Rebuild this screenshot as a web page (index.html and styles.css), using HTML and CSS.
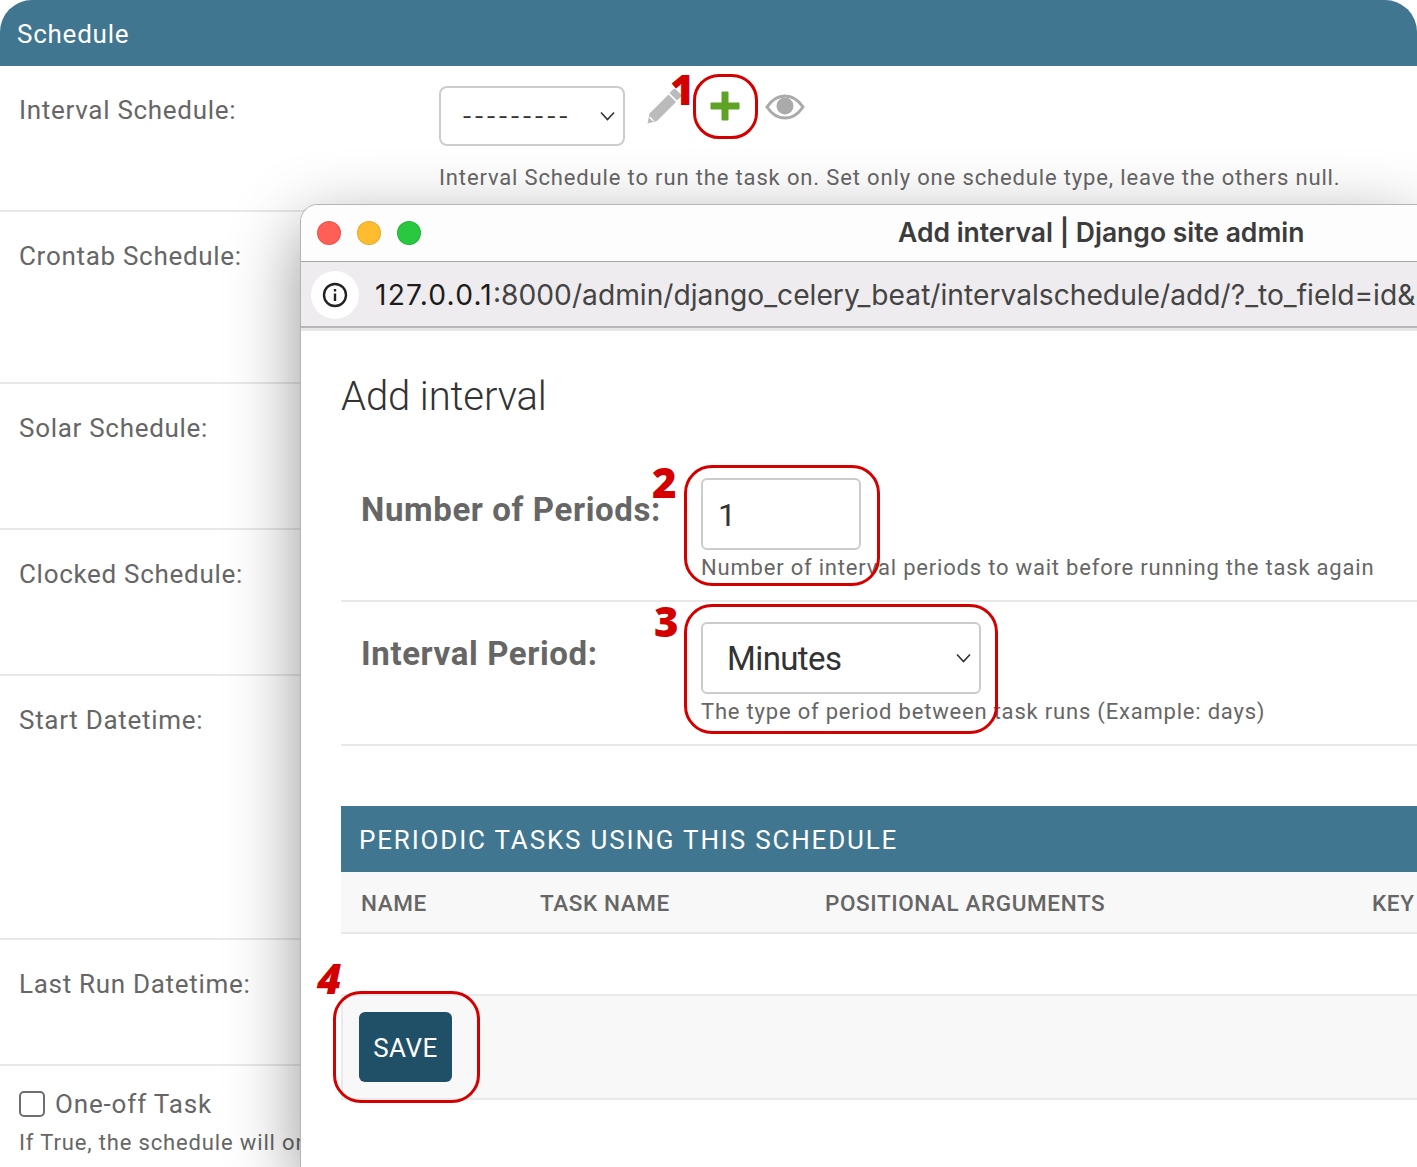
FILE: index.html
```html
<!DOCTYPE html>
<html>

<head>
  <title>Add interval | Django site admin</title>
  <link rel="stylesheet" href="styles.css">
</head>

<body>
  <div class="page">
    <h2 class="module-title">Schedule</h2>

    <div class="row row-interval">
      <div class="row-label">Interval Schedule:</div>
      <div class="row-field">
        <div class="field-line">
          <div class="select select-main"><span>---------</span>
            <svg class="chevron" viewBox="0 0 16 10"><path d="M1.500 1.500 8 8.500l6.500-7" /></svg>
          </div>
          <svg class="icon-pencil" viewBox="0 0 36 36"><path d="M27 1.500a2 2 0 0 1 3 0l4.500 4.500a2 2 0 0 1 0 3l-3.500 3.500-7.500-7.500Z" /><path d="M22.500 6.500 30 14 11 33 1.500 35.500 3.500 25.500Z" /><path class="pencil-cut" d="M3.500 29 7.500 33" /></svg>
          <svg class="icon-plus" viewBox="0 0 32 32"><path d="M12.500 2.500a1 1 0 0 1 1-1h5a1 1 0 0 1 1 1v10h10a1 1 0 0 1 1 1v5a1 1 0 0 1-1 1h-10v10a1 1 0 0 1-1 1h-5a1 1 0 0 1-1-1v-10h-10a1 1 0 0 1-1-1v-5a1 1 0 0 1 1-1h10Z" /></svg>
          <svg class="icon-eye" viewBox="0 0 40 26"><path class="eye-lid" d="M2 13C7 5.500 13 2 20 2s13 3.500 18 11c-5 7.500-11 11-18 11S7 20.500 2 13Z" /><circle cx="20" cy="12" r="8.500" /></svg>
        </div>
        <p class="help help-main">Interval Schedule to run the task on. Set only one schedule type, leave the others null.</p>
      </div>
    </div>
    <div class="row row-crontab"><div class="row-label">Crontab Schedule:</div></div>
    <div class="row row-solar"><div class="row-label">Solar Schedule:</div></div>
    <div class="row row-clocked"><div class="row-label">Clocked Schedule:</div></div>
    <div class="row row-start"><div class="row-label">Start Datetime:</div></div>
    <div class="row row-last"><div class="row-label">Last Run Datetime:</div></div>
    <div class="row-oneoff">
      <div class="oneoff-line"><span class="checkbox"></span>One-off Task</div>
      <p class="help">If True, the schedule will only run the task a single time</p>
    </div>
  </div>

  <div class="popup">
    <div class="titlebar">
      <div class="lights">
        <span class="light light-red"></span>
        <span class="light light-yellow"></span>
        <span class="light light-green"></span>
      </div>
      <div class="window-title">Add interval | Django site admin</div>
    </div>
    <div class="urlbar">
      <span class="info-badge">
        <svg viewBox="0 0 26 26"><circle cx="13" cy="13" r="11" /><path d="M13 11.500V19M13 7V9.500" /></svg>
      </span>
      <span class="url"><b>127.0.0.1</b>:8000/admin/django_celery_beat/intervalschedule/add/?_to_field=id&amp;</span>
    </div>

    <div class="content">
      <h1>Add interval</h1>

      <div class="popup-row">
        <div class="popup-label">Number of Periods:</div>
        <div>
          <div class="input">1</div>
          <p class="help">Number of interval periods to wait before running the task again</p>
        </div>
      </div>

      <div class="popup-row">
        <div class="popup-label">Interval Period:</div>
        <div>
          <div class="select select-period"><span>Minutes</span>
            <svg class="chevron" viewBox="0 0 16 10"><path d="M1.500 1.500 8 8.500l6.500-7" /></svg>
          </div>
          <p class="help">The type of period between task runs (Example: days)</p>
        </div>
      </div>

      <div class="inline-group">
        <h2 class="inline-title">PERIODIC TASKS USING THIS SCHEDULE</h2>
        <div class="inline-head">
          <span class="col col-name">NAME</span>
          <span class="col col-task">TASK NAME</span>
          <span class="col col-args">POSITIONAL ARGUMENTS</span>
          <span class="col">KEY</span>
        </div>
      </div>

      <div class="submit-row">
        <span class="save-btn">SAVE</span>
      </div>
    </div>
  </div>

  <!-- red tutorial marks -->
  <div class="mark mark-plus"></div>
  <div class="mark mark-periods"></div>
  <div class="mark mark-period"></div>
  <div class="mark mark-save"></div>
  <div class="num num-1">1</div>
  <div class="num num-2">2</div>
  <div class="num num-3">3</div>
  <div class="num num-4">4</div>
</body>

</html>
```

FILE: styles.css
```css
html,
body {
  margin: 0;
  height: 100%;
}

body {
  position: relative;
  width: 1417px;
  height: 1167px;
  overflow: hidden;
  background: #fff;
  font-family: Roboto, "Liberation Sans", sans-serif;
  color: #666;
}

p,
h1,
h2 {
  margin: 0;
  font-weight: 400;
}

/* page behind the popup */
.module-title {
  height: 66px;
  padding: 19px 0 0 17px;
  box-sizing: border-box;
  background: #417690;
  border-radius: 32px 32px 0 0;
  color: #fff;
  font-size: 26px;
  line-height: 30px;
  letter-spacing: 0.75px;
}

.row {
  display: flex;
  box-sizing: border-box;
  padding: 28px 0 0 19px;
  border-bottom: 2px solid #e8e8e8;
  font-size: 26px;
  letter-spacing: 0.7px;
}

.row-label {
  width: 420px;
  line-height: 32px;
  flex-shrink: 0;
}

.row-interval { height: 146px; }
.row-crontab { height: 172px; }
.row-solar { height: 146px; }
.row-clocked { height: 146px; }
.row-start { height: 264px; }
.row-last { height: 126px; }

.row-field {
  flex: 1;
}

.field-line {
  display: flex;
  align-items: flex-start;
}

.select {
  display: flex;
  align-items: center;
  justify-content: space-between;
  box-sizing: border-box;
  border: 2px solid #ccc;
  border-radius: 8px;
  color: #333;
}

.select-main {
  width: 186px;
  height: 60px;
  margin-top: -8px;
  padding: 0 7px 0 21px;
  font-family: Inter, "Liberation Sans", sans-serif;
  font-size: 22px;
  letter-spacing: 1.9px;
}

.chevron {
  width: 17px;
  height: 10px;
  flex-shrink: 0;
  fill: none;
  stroke: #333;
  stroke-width: 1.6;
}

.icon-pencil {
  width: 36px;
  height: 36px;
  margin: -6px 0 0 21px;
  fill: #bbb;
}

.pencil-cut {
  fill: none;
  stroke: #fff;
  stroke-width: 1.5;
}

.icon-plus {
  width: 32px;
  height: 32px;
  margin: -6px 0 0 27px;
  fill: #5fa225;
  position: relative;
  top: 2px;
}

.icon-eye {
  width: 40px;
  height: 26px;
  margin: 0 0 0 24px;
  fill: #aaa;
}

.eye-lid {
  fill: #fff;
  stroke: #aaa;
  stroke-width: 3;
}

.help {
  font-size: 22px;
  line-height: 28px;
  letter-spacing: 0.85px;
  color: #666;
  white-space: nowrap;
}

.help-main {
  margin-top: 18px;
}

.row-oneoff {
  padding: 22px 0 0 19px;
  font-size: 26px;
  letter-spacing: 0.85px;
}

.oneoff-line {
  display: flex;
  align-items: center;
  line-height: 32px;
}

.checkbox {
  width: 22px;
  height: 22px;
  margin-right: 10px;
  border: 2px solid #6f6f6f;
  border-radius: 5px;
}

.row-oneoff .help {
  margin-top: 9px;
}

/* popup window */
.popup {
  position: absolute;
  left: 300px;
  top: 204px;
  width: 1117px;
  height: 963px;
  box-sizing: border-box;
  overflow: hidden;
  background: #fff;
  border: 1px solid #b4b4b4;
  border-width: 1px 0 0 1px;
  border-radius: 18px 0 0 0;
  box-shadow: 0 22px 70px rgba(0, 0, 0, 0.42);
}

.titlebar {
  display: flex;
  align-items: center;
  box-sizing: border-box;
  height: 57px;
  padding: 0 0 3px 16px;
  background: #fdfdfd;
  border-bottom: 1px solid #a6a6a6;
}

.lights {
  display: flex;
  gap: 16px;
  margin-top: 3px;
}

.light {
  width: 24px;
  height: 24px;
  box-sizing: border-box;
  border-radius: 50%;
  border: 1px solid rgba(0, 0, 0, 0.1);
}

.light-red { background: #ff5f57; }
.light-yellow { background: #febc2e; }
.light-green { background: #28c840; }

.window-title {
  margin-left: 477px;
  font-family: Inter, "Liberation Sans", sans-serif;
  font-weight: 600;
  font-size: 26.500px;
  color: #3c3c3c;
  white-space: nowrap;
}

.urlbar {
  display: flex;
  align-items: center;
  box-sizing: border-box;
  height: 66px;
  padding: 1px 0 0 10px;
  background: #eeecee;
  border-bottom: 2px solid #b8b8b8;
  box-shadow: 0 3px 0 #e6e6e6;
}

.info-badge {
  display: flex;
  align-items: center;
  justify-content: center;
  flex-shrink: 0;
  width: 48px;
  height: 48px;
  background: #fff;
  border-radius: 50%;
}

.info-badge svg {
  width: 26px;
  height: 26px;
  fill: none;
  stroke: #222;
  stroke-width: 2.400;
}

.url {
  margin-left: 16px;
  font-family: Inter, "Liberation Sans", sans-serif;
  font-size: 28.200px;
  color: #444;
  white-space: nowrap;
}

.url b {
  font-weight: 400;
  letter-spacing: 1.2px;
  color: #1c1c1c;
}

.content {
  padding: 0 0 0 40px;
}

.content h1 {
  box-sizing: border-box;
  padding-top: 45px;
  height: 130px;
  font-size: 40px;
  font-weight: 300;
  line-height: 48px;
  letter-spacing: -0.1px;
  color: #333;
}

.popup-row {
  display: flex;
  box-sizing: border-box;
  height: 144px;
  padding: 20px 0 0 20px;
  border-bottom: 2px solid #e8e8e8;
}

.popup-label {
  width: 340px;
  flex-shrink: 0;
  margin-top: 12px;
  font-size: 33px;
  line-height: 40px;
  letter-spacing: 0.62px;
  font-weight: 700;
  color: #666;
  white-space: nowrap;
}

.input {
  box-sizing: border-box;
  width: 160px;
  height: 72px;
  padding: 0 15px;
  border: 2px solid #ccc;
  border-radius: 6px;
  font-size: 32px;
  line-height: 70px;
  color: #333;
}

.select-period {
  width: 280px;
  height: 72px;
  padding: 0 7px 0 24px;
  border-radius: 6px;
  font-size: 33px;
  letter-spacing: -0.6px;
}

.popup-row .help {
  margin-top: 4px;
  letter-spacing: 0.8px;
}

.inline-group {
  margin-top: 60px;
}

.inline-title {
  height: 66px;
  padding-left: 18px;
  background: #417690;
  color: #fff;
  font-size: 26px;
  line-height: 68px;
  letter-spacing: 1.82px;
  white-space: nowrap;
}

.inline-head {
  display: flex;
  box-sizing: border-box;
  height: 62px;
  padding-left: 20px;
  background: #f8f8f8;
  border-bottom: 2px solid #e8e8e8;
  font-size: 22.500px;
  line-height: 62px;
  letter-spacing: 0.6px;
  font-weight: 500;
  color: #666;
  white-space: nowrap;
}

.col {
  flex-shrink: 0;
}

.col-name { width: 179px; }
.col-task { width: 285px; }
.col-args { width: 547px; }

.submit-row {
  box-sizing: border-box;
  height: 106px;
  margin-top: 60px;
  padding: 16px 0 0 16px;
  background: #f8f8f8;
  border: 2px solid #eaeaea;
  border-right: 0;
}

.save-btn {
  display: block;
  width: 93px;
  height: 70px;
  background: #205067;
  border-radius: 6px;
  color: #fff;
  font-size: 26px;
  line-height: 72px;
  letter-spacing: 0.5px;
  text-align: center;
}

/* red marks */
.mark {
  position: absolute;
  box-sizing: border-box;
  border: 3px solid #d40000;
}

.mark-plus {
  left: 693px;
  top: 74px;
  width: 65px;
  height: 65px;
  border-radius: 26px;
}

.mark-periods {
  left: 684px;
  top: 465px;
  width: 196px;
  height: 121px;
  border-radius: 28px;
}

.mark-period {
  left: 684px;
  top: 604px;
  width: 314px;
  height: 130px;
  border-radius: 28px;
}

.mark-save {
  left: 333px;
  top: 991px;
  width: 147px;
  height: 112px;
  border-radius: 28px;
}

.num {
  position: absolute;
  font-family: "Open Sans", "Noto Sans", sans-serif;
  font-weight: 800;
  font-size: 42px;
  line-height: 42px;
  color: #d40000;
}

.num-1 { left: 670px; top: 68px; }
.num-2 { left: 652px; top: 461px; }
.num-3 { left: 654px; top: 600px; }
.num-4 { left: 317px; top: 957px; font-style: italic; }
```
